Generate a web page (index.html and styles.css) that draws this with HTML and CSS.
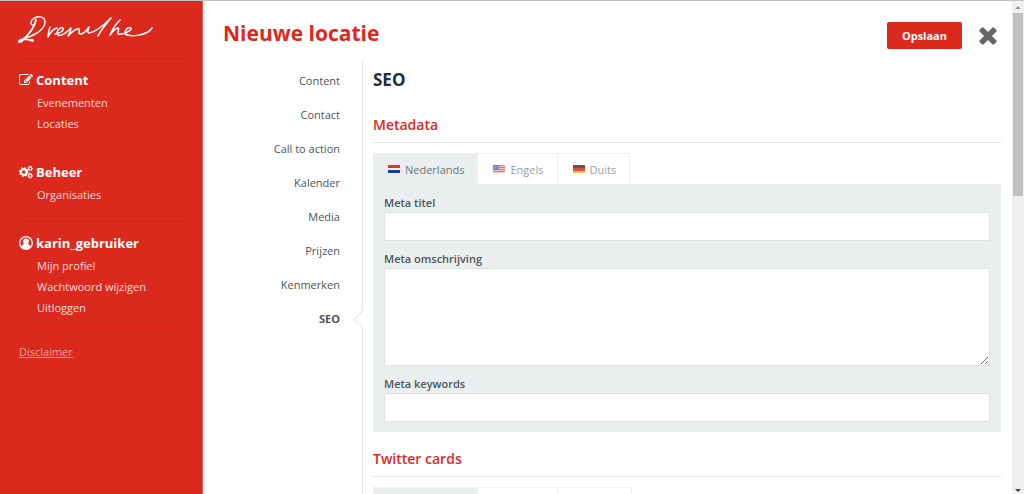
FILE: index.html
```html
<!DOCTYPE html>
<html lang="nl">
<head>
<meta charset="utf-8">
<title>Nieuwe locatie</title>
<link rel="stylesheet" href="styles.css">
</head>
<body>
<div class="app">
  <aside class="sidebar">
    <a class="logo" href="#" aria-label="Drenthe">
      <svg width="138" height="32" viewBox="18 13 138 32" fill="none" stroke="#fff" stroke-linecap="round" stroke-linejoin="round">
        <path stroke-width="1.8" d="M36 20C35 25 30 33 24 39C22 42 18 43 19 41C23 37 29 40 33 41C33 40 32 39 31 40"/>
        <path stroke-width="1.4" d="M24 38C32 37 45 30 45 22C45 16 37 15 32 20C30 23 31 25 33 25"/>
        <path stroke-width="1.500" d="M50 27C49 30 48 34 48 37C50 33 53 29 57 28M55 34C59 34 65 30 63 28C59 27 55 33 58 35C62 37 67 32 71 28C71 31 69 34 68 36C72 32 77 28 79 29C80 31 78 34 80 34C83 34 87 30 89 27C88 30 87 33 89 33C96 32 104 25 111 18C107 23 101 30 98 36"/>
        <path stroke-width="1.500" d="M120 20C117 23 112 30 110 35C113 31 116 28 118 28C120 29 117 32 118 34C122 35 132 31 131 28C128 26 124 31 125 34C130 37 147 36 152 28"/>
      </svg>
    </a>
    <section class="group">
      <h2 class="group-title">
        <svg class="icon" viewBox="0 0 1792 1792" fill="currentColor"><path d="M888 1184l116-116-152-152-116 116v56h96v96h56zm440-720q-16-16-33 1l-350 350q-17 17-1 33t33-1l350-350q17-17 1-33zm80 594v190q0 119-84.5 203.5t-203.5 84.5h-832q-119 0-203.5-84.5t-84.5-203.5v-832q0-119 84.5-203.5t203.5-84.5h832q63 0 117 25 15 7 18 23 3 17-9 29l-49 49q-14 14-32 8-23-6-45-6h-832q-66 0-113 47t-47 113v832q0 66 47 113t113 47h832q66 0 113-47t47-113v-126q0-13 9-22l64-64q15-15 35-7t20 29zm-96-738l288 288-672 672h-288v-288zm444 132l-92 92-288-288 92-92q28-28 68-28t68 28l152 152q28 28 28 68t-28 68z"/></svg>
        Content
      </h2>
      <a class="item" href="#">Evenementen</a>
      <a class="item" href="#">Locaties</a>
    </section>
    <section class="group">
      <h2 class="group-title">
        <svg class="icon" viewBox="0 0 14 14" fill="none" stroke="currentColor">
          <circle cx="4.8" cy="7" r="2.9" stroke-width="2.1"/>
          <circle cx="4.8" cy="7" r="4.3" stroke-width="1.2" stroke-dasharray="1.6 1.78"/>
          <circle cx="11.2" cy="3.4" r="1.6" stroke-width="1.2"/>
          <circle cx="11.2" cy="3.4" r="2.4" stroke-width=".8" stroke-dasharray="1 .88"/>
          <circle cx="11.2" cy="10.7" r="1.6" stroke-width="1.2"/>
          <circle cx="11.2" cy="10.7" r="2.4" stroke-width=".8" stroke-dasharray="1 .88"/>
        </svg>
        Beheer
      </h2>
      <a class="item" href="#">Organisaties</a>
    </section>
    <section class="group">
      <h2 class="group-title">
        <svg class="icon" viewBox="0 0 14 14">
          <circle cx="7" cy="7" r="6.3" fill="none" stroke="currentColor" stroke-width="1.3"/>
          <path fill="currentColor" d="M7 2.6a2.9 2.9 0 0 1 2.9 3c0 1.1-.4 2-1 2.6 1.6.2 2.5 1.2 2.7 2.7A6.200 6.200 0 0 1 7 13a6.200 6.200 0 0 1-4.600-2.100C2.600 9.400 3.500 8.400 5.100 8.200a3.600 3.600 0 0 1-1-2.600A2.900 2.900 0 0 1 7 2.600z"/>
        </svg>
        karin_gebruiker
      </h2>
      <a class="item" href="#">Mijn profiel</a>
      <a class="item" href="#">Wachtwoord wijzigen</a>
      <a class="item" href="#">Uitloggen</a>
    </section>
    <div class="group">
      <a class="disclaimer" href="#">Disclaimer</a>
    </div>
  </aside>

  <main class="main">
    <header class="header">
      <h1 class="title">Nieuwe locatie</h1>
      <button class="save" type="button">Opslaan</button>
      <button class="close" type="button" aria-label="Sluiten">
        <svg width="26" height="26" viewBox="0 0 1792 1792" fill="currentColor"><path d="M1490 1322q0 40-28 68l-136 136q-28 28-68 28t-68-28l-294-294-294 294q-28 28-68 28t-68-28l-136-136q-28-28-28-68t28-68l294-294-294-294q-28-28-28-68t28-68l136-136q28-28 68-28t68 28l294 294 294-294q28-28 68-28t68 28l136 136q28 28 28 68t-28 68l-294 294 294 294q28 28 28 68z"/></svg>
      </button>
    </header>
    <div class="body">
      <nav class="steps">
        <a class="step" href="#">Content</a>
        <a class="step" href="#">Contact</a>
        <a class="step" href="#">Call to action</a>
        <a class="step" href="#">Kalender</a>
        <a class="step" href="#">Media</a>
        <a class="step" href="#">Prijzen</a>
        <a class="step" href="#">Kenmerken</a>
        <a class="step active" href="#">SEO</a>
      </nav>
      <div class="content">
        <h2 class="page-title">SEO</h2>
        <h3 class="section-title">Metadata</h3>
        <div class="tabs">
          <button class="tab selected" type="button"><svg class="flag" viewBox="0 0 12 8"><path fill="#f4f4f6" d="M0 0h12v8H0z"/><path fill="#e0342c" d="M0 0h12v3H0z"/><path fill="#173f91" d="M0 5h12v3H0z"/></svg>Nederlands</button>
          <button class="tab" type="button"><svg class="flag faded" viewBox="0 0 12 8"><path fill="#f9b9b4" d="M0 0h12v8H0z"/><path stroke="#e2504a" d="M0 .5h12M0 2.500h12M0 4.500h12M0 6.500h12"/><path fill="#3b5fc4" d="M0 0h6v5H0z"/><path stroke="#b9c8f4" stroke-width=".6" stroke-dasharray=".6 .9" d="M.7 1.200h5M.7 2.500h5M.7 3.800h5"/></svg>Engels</button>
          <button class="tab" type="button"><svg class="flag faded" viewBox="0 0 12 8"><path fill="#3a2c28" d="M0 0h12v3H0z"/><path fill="#dc2414" d="M0 3h12v3H0z"/><path fill="#f2b632" d="M0 6h12v2H0z"/></svg>Duits</button>
        </div>
        <div class="panel">
          <label class="label" for="meta-title">Meta titel</label>
          <input class="field" id="meta-title" type="text">
          <label class="label" for="meta-description">Meta omschrijving</label>
          <textarea class="field area" id="meta-description"></textarea>
          <label class="label" for="meta-keywords">Meta keywords</label>
          <input class="field" id="meta-keywords" type="text">
        </div>
        <h3 class="section-title">Twitter cards</h3>
        <div class="tabs">
          <div class="tab selected wide"></div>
          <div class="tab medium"></div>
          <div class="tab narrow"></div>
        </div>
      </div>
    </div>
  </main>

  <div class="scrollbar" aria-hidden="true">
    <svg class="arrow" viewBox="0 0 12 12"><path fill="#8a8a8a" d="M3.500 8h5L6 5z"/></svg>
    <div class="track"><div class="thumb"></div></div>
    <svg class="arrow" viewBox="0 0 12 12"><path fill="#404040" d="M3 7h6L6 10z"/></svg>
  </div>
</div>
</body>
</html>
```
FILE: styles.css
```css
* {
  box-sizing: border-box;
}

body {
  margin: 0;
  background: #fff;
  color: #4a5659;
  font-family: "Open Sans", "Noto Sans", sans-serif;
  font-size: 11px;
}

h1, h2, h3 {
  margin: 0;
}

a {
  color: inherit;
  text-decoration: none;
}

button {
  border: 0;
  background: none;
  padding: 0;
  font: inherit;
  cursor: pointer;
}

.app {
  display: flex;
  height: 100vh;
  overflow: hidden;
  border-top: 1px solid #c3c3c3;
}

.sidebar {
  flex: none;
  width: 203px;
  padding: 12px 18px 0;
  background: #dc291e;
  border-right: 1px solid #e4574e;
  color: #fff;
}

.logo {
  display: block;
  height: 45px;
}

.logo svg {
  display: block;
}

.group {
  display: flex;
  flex-direction: column;
  padding: 9px 0 16px 1px;
  border-top: 1px solid #cf261c;
}

.group-title {
  display: flex;
  align-items: center;
  gap: 3px;
  font-size: 13px;
  font-weight: 700;
  line-height: 24px;
}

.icon {
  width: 14px;
  height: 14px;
}

.item {
  padding-left: 18px;
  line-height: 21px;
  color: #fbdcda;
}

.disclaimer {
  line-height: 16px;
  color: #f0a09b;
  text-decoration: underline;
}

.main {
  flex: 1;
  min-width: 0;
  display: flex;
  flex-direction: column;
  padding: 0 11px 0 20px;
}

.header {
  flex: none;
  display: flex;
  align-items: flex-start;
  height: 59px;
}

.title {
  flex: 1;
  padding-top: 17px;
  color: #dc291e;
  font-size: 21px;
  font-weight: 700;
  line-height: 30px;
}

.save {
  margin: 21px 13px 0 0;
  padding: 0 15px;
  border-radius: 2px;
  background: #dc291e;
  color: #fff;
  font-weight: 700;
  line-height: 27px;
}

.close {
  margin-top: 21px;
  color: #666;
}

.close svg {
  display: block;
}

.body {
  flex: 1;
  min-height: 0;
  display: flex;
}

.steps {
  flex: none;
  display: flex;
  flex-direction: column;
  width: 140px;
  padding-top: 4px;
  border-right: 1px solid #e3e6e6;
}

.step {
  position: relative;
  padding-right: 22px;
  line-height: 34px;
  text-align: right;
}

.active {
  font-weight: 700;
}

.active::after {
  content: "";
  position: absolute;
  top: 11px;
  right: -7px;
  width: 12px;
  height: 12px;
  border: solid #e3e6e6;
  border-width: 0 0 1px 1px;
  background: #fff;
  transform: rotate(45deg);
}

.content {
  flex: 1;
  min-width: 0;
  padding-left: 10px;
}

.page-title {
  padding: 7px 0 21px;
  color: #252e31;
  font-size: 17px;
  font-weight: 700;
  line-height: 26px;
}

.section-title {
  margin-bottom: 10px;
  padding-bottom: 6px;
  border-bottom: 1px solid #dfe2e2;
  color: #dc291e;
  font-size: 14px;
  font-weight: 600;
  line-height: 22px;
}

.tabs {
  display: flex;
}

.tab {
  display: flex;
  align-items: center;
  gap: 5px;
  height: 31px;
  padding: 0 13px 0 15px;
  border: solid #ecf0f0;
  border-width: 1px 1px 0 0;
  color: #93a3a3;
}

.selected {
  background: #eaeeee;
  color: #6a7979;
}

.wide {
  width: 105px;
}

.medium {
  width: 80px;
}

.narrow {
  width: 74px;
}

.flag {
  width: 12px;
  height: 8px;
}

.faded {
  opacity: .8;
}

.panel {
  display: flex;
  flex-direction: column;
  margin-bottom: 16px;
  padding: 10px 11px;
  background: #eaeeee;
}

.label {
  font-weight: 600;
  line-height: 18px;
}

.field {
  height: 29px;
  margin-bottom: 9px;
  padding: 4px 8px;
  border: 1px solid #dce1e1;
  border-radius: 2px;
  background: #fff;
  font: inherit;
}

.field:last-child {
  margin-bottom: 0;
}

.area {
  height: 98px;
  resize: vertical;
}

.scrollbar {
  flex: none;
  display: flex;
  flex-direction: column;
  width: 12px;
  background: #f0f0f0;
}

.arrow {
  width: 12px;
  height: 12px;
}

.track {
  flex: 1;
  padding: 0 1px;
}

.thumb {
  height: 39%;
  background: #c0c0c0;
}
```
